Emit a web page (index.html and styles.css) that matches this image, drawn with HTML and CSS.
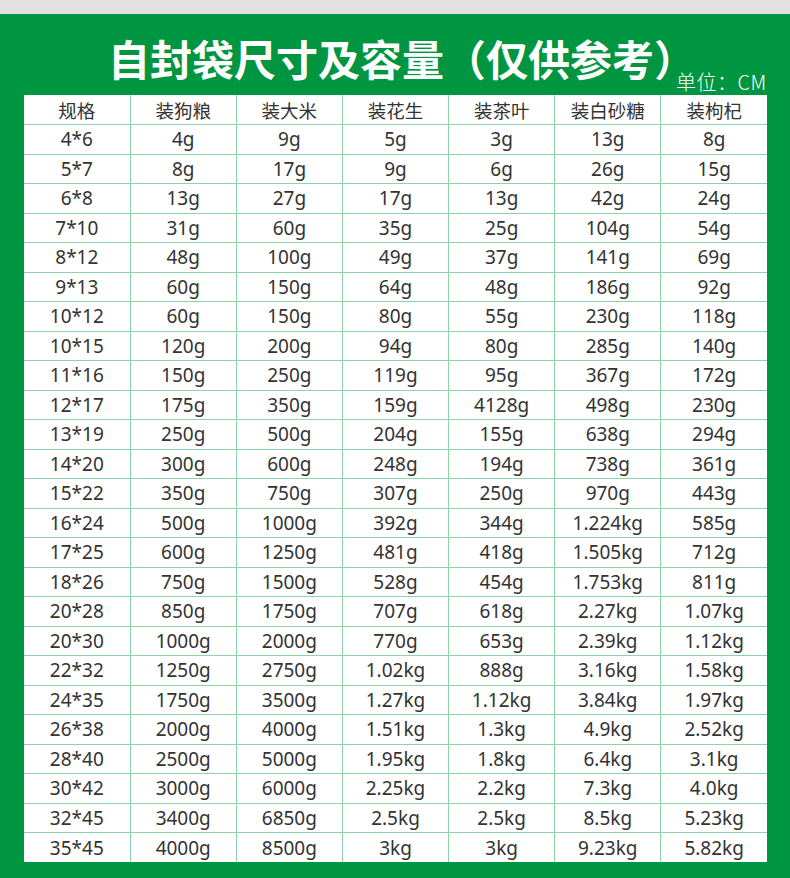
FILE: index.html
```html
<!DOCTYPE html>
<html lang="zh">
<head>
<meta charset="utf-8">
<title>自封袋尺寸及容量</title>
<link rel="stylesheet" href="styles.css">
</head>
<body>
<div class="topbar"></div>
<div class="panel">
  <div class="title-row">
    <h1 class="title">自封袋尺寸及容量（仅供参考<span class="close">）</span></h1>
    <span class="unit">单位：CM</span>
  </div>
  <table class="spec">
    <thead>
      <tr><th>规格</th><th>装狗粮</th><th>装大米</th><th>装花生</th><th>装茶叶</th><th>装白砂糖</th><th>装枸杞</th></tr>
    </thead>
    <tbody>
      <tr><td>4*6</td><td>4g</td><td>9g</td><td>5g</td><td>3g</td><td>13g</td><td>8g</td></tr>
      <tr><td>5*7</td><td>8g</td><td>17g</td><td>9g</td><td>6g</td><td>26g</td><td>15g</td></tr>
      <tr><td>6*8</td><td>13g</td><td>27g</td><td>17g</td><td>13g</td><td>42g</td><td>24g</td></tr>
      <tr><td>7*10</td><td>31g</td><td>60g</td><td>35g</td><td>25g</td><td>104g</td><td>54g</td></tr>
      <tr><td>8*12</td><td>48g</td><td>100g</td><td>49g</td><td>37g</td><td>141g</td><td>69g</td></tr>
      <tr><td>9*13</td><td>60g</td><td>150g</td><td>64g</td><td>48g</td><td>186g</td><td>92g</td></tr>
      <tr><td>10*12</td><td>60g</td><td>150g</td><td>80g</td><td>55g</td><td>230g</td><td>118g</td></tr>
      <tr><td>10*15</td><td>120g</td><td>200g</td><td>94g</td><td>80g</td><td>285g</td><td>140g</td></tr>
      <tr><td>11*16</td><td>150g</td><td>250g</td><td>119g</td><td>95g</td><td>367g</td><td>172g</td></tr>
      <tr><td>12*17</td><td>175g</td><td>350g</td><td>159g</td><td>4128g</td><td>498g</td><td>230g</td></tr>
      <tr><td>13*19</td><td>250g</td><td>500g</td><td>204g</td><td>155g</td><td>638g</td><td>294g</td></tr>
      <tr><td>14*20</td><td>300g</td><td>600g</td><td>248g</td><td>194g</td><td>738g</td><td>361g</td></tr>
      <tr><td>15*22</td><td>350g</td><td>750g</td><td>307g</td><td>250g</td><td>970g</td><td>443g</td></tr>
      <tr><td>16*24</td><td>500g</td><td>1000g</td><td>392g</td><td>344g</td><td>1.224kg</td><td>585g</td></tr>
      <tr><td>17*25</td><td>600g</td><td>1250g</td><td>481g</td><td>418g</td><td>1.505kg</td><td>712g</td></tr>
      <tr><td>18*26</td><td>750g</td><td>1500g</td><td>528g</td><td>454g</td><td>1.753kg</td><td>811g</td></tr>
      <tr><td>20*28</td><td>850g</td><td>1750g</td><td>707g</td><td>618g</td><td>2.27kg</td><td>1.07kg</td></tr>
      <tr><td>20*30</td><td>1000g</td><td>2000g</td><td>770g</td><td>653g</td><td>2.39kg</td><td>1.12kg</td></tr>
      <tr><td>22*32</td><td>1250g</td><td>2750g</td><td>1.02kg</td><td>888g</td><td>3.16kg</td><td>1.58kg</td></tr>
      <tr><td>24*35</td><td>1750g</td><td>3500g</td><td>1.27kg</td><td>1.12kg</td><td>3.84kg</td><td>1.97kg</td></tr>
      <tr><td>26*38</td><td>2000g</td><td>4000g</td><td>1.51kg</td><td>1.3kg</td><td>4.9kg</td><td>2.52kg</td></tr>
      <tr><td>28*40</td><td>2500g</td><td>5000g</td><td>1.95kg</td><td>1.8kg</td><td>6.4kg</td><td>3.1kg</td></tr>
      <tr><td>30*42</td><td>3000g</td><td>6000g</td><td>2.25kg</td><td>2.2kg</td><td>7.3kg</td><td>4.0kg</td></tr>
      <tr><td>32*45</td><td>3400g</td><td>6850g</td><td>2.5kg</td><td>2.5kg</td><td>8.5kg</td><td>5.23kg</td></tr>
      <tr><td>35*45</td><td>4000g</td><td>8500g</td><td>3kg</td><td>3kg</td><td>9.23kg</td><td>5.82kg</td></tr>
    </tbody>
  </table>
</div>
</body>
</html>
```
FILE: styles.css
```css
html, body {
  margin: 0;
  padding: 0;
  background: #e1e1e1;
}
body {
  width: 790px;
  height: 878px;
  overflow: hidden;
  font-family: "Noto Sans", "Noto Sans CJK SC", sans-serif;
}
.topbar {
  height: 14px;
  background: #e1e1e1;
}
.panel {
  height: 864px;
  background: #009540;
  padding: 0 23px 0 24px;
  box-sizing: border-box;
}
.title-row {
  height: 81px;
  display: flex;
  align-items: flex-end;
  padding-left: 84px;
  box-sizing: border-box;
}
.title {
  margin: 0 0 16px 0;
  font-family: "Noto Sans CJK SC", sans-serif;
  font-size: 42px;
  line-height: 42px;
  font-weight: 700;
  color: #ffffff;
  white-space: nowrap;
}
.title .close {
  letter-spacing: -22px;
}
.unit {
  margin: 0 0 3px 2px;
  font-family: "Noto Sans CJK SC", sans-serif;
  font-size: 20px;
  line-height: 20px;
  font-weight: 300;
  letter-spacing: 0.5px;
  color: #ffffff;
  white-space: nowrap;
}
.spec {
  width: 743px;
  border-collapse: collapse;
  table-layout: fixed;
  background: #ffffff;
}
.spec tr {
  height: 29.5px;
}
.spec th, .spec td {
  border: 1px solid #8fd3a8;
  padding: 0;
  text-align: center;
  vertical-align: middle;
  color: #333333;
  font-size: 19px;
  font-weight: 400;
  line-height: 18px;
  white-space: nowrap;
}
.spec th {
  font-family: "Noto Sans CJK SC", sans-serif;
  font-size: 18.5px;
}
.spec tr:first-child th {
  border-top: none;
}
.spec tr > :first-child {
  border-left: none;
}
.spec tr > :last-child {
  border-right: none;
}
.spec tbody tr:last-child td {
  border-bottom: none;
}
```
